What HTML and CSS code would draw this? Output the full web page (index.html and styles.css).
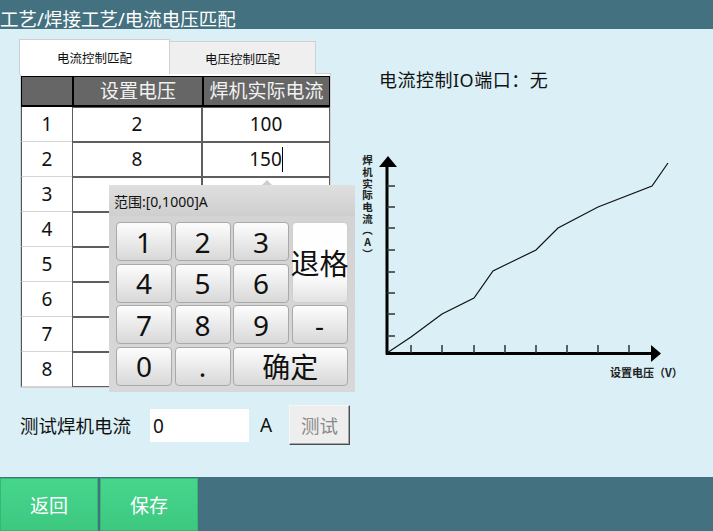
FILE: index.html
```html
<!DOCTYPE html>
<html lang="zh-CN">
<head>
<meta charset="utf-8">
<title>电流电压匹配</title>
<link rel="stylesheet" href="styles.css">
</head>
<body>
<div class="screen">
  <header class="topbar">工艺/焊接工艺/电流电压匹配</header>
  <main class="content">
    <section class="left">
      <div class="tabs">
        <div class="tab active">电流控制匹配</div>
        <div class="tab inactive">电压控制匹配</div>
      </div>
      <div class="panel">
        <div class="thead">
          <div class="th"></div>
          <div class="th">设置电压</div>
          <div class="th">焊机实际电流</div>
        </div>
        <div class="tr"><div class="num">1</div><div class="cell">2</div><div class="cell">100</div></div>
        <div class="tr"><div class="num">2</div><div class="cell">8</div><div class="cell">150<span class="caret"></span></div></div>
        <div class="tr"><div class="num">3</div><div class="cell"></div><div class="cell"></div></div>
        <div class="tr"><div class="num">4</div><div class="cell"></div><div class="cell"></div></div>
        <div class="tr"><div class="num">5</div><div class="cell"></div><div class="cell"></div></div>
        <div class="tr"><div class="num">6</div><div class="cell"></div><div class="cell"></div></div>
        <div class="tr"><div class="num">7</div><div class="cell"></div><div class="cell"></div></div>
        <div class="tr"><div class="num">8</div><div class="cell"></div><div class="cell"></div></div>
      </div>
      <div class="test-row">
        <span class="test-label">测试焊机电流</span>
        <div class="test-input">0</div>
        <span class="unit">A</span>
        <button class="test-btn">测试</button>
      </div>

      <div class="pop-arrow"></div>
      <div class="keypad">
        <div class="kp-head">范围:[0,1000]A</div>
        <div class="kp-grid">
          <button class="key">1</button>
          <button class="key">2</button>
          <button class="key">3</button>
          <button class="key back">退格</button>
          <button class="key">4</button>
          <button class="key">5</button>
          <button class="key">6</button>
          <button class="key">7</button>
          <button class="key">8</button>
          <button class="key">9</button>
          <button class="key">-</button>
          <button class="key">0</button>
          <button class="key">.</button>
          <button class="key ok">确定</button>
        </div>
      </div>
    </section>
    <section class="right">
      <div class="io">电流控制IO端口：无</div>
      <svg class="chart" viewBox="355 150 335 240" width="335" height="240" xmlns="http://www.w3.org/2000/svg">
        <text class="ylabel" x="367.5" y="155">焊机实际电流（A）</text>
        <path d="M387 354.5 V165" stroke="#000" stroke-width="3" fill="none"/>
        <polygon points="388,156 379,167 397,167" fill="#000"/>
        <path d="M386 353.5 H652" stroke="#000" stroke-width="3" fill="none"/>
        <polygon points="661,353.5 651,345 651,362" fill="#000"/>
        <path d="M387 186h8M387 207h8M387 228h8M387 250h8M387 272h8M387 293h8M387 314h8M387 336h8" stroke="#333" stroke-width="1.5" fill="none"/>
        <path d="M411 345v8M442 345v8M474 345v8M505 345v8M536 345v8M567 345v8M598 345v8M629 345v8" stroke="#333" stroke-width="1.5" fill="none"/>
        <polyline points="387,353 411,337 442,314 474,298 493,271 536,250 558,228 598,207 652,186 668,163" fill="none" stroke="#111" stroke-width="1.2"/>
        <text class="xlabel" x="610" y="377">设置电压（V）</text>
      </svg>
    </section>
  </main>
  <footer class="bottombar">
    <button class="nav-btn">返回</button>
    <button class="nav-btn">保存</button>
  </footer>
</div>
</body>
</html>
```
FILE: styles.css
```css
* { box-sizing: border-box; }
html, body { margin: 0; padding: 0; }
body {
  width: 713px;
  height: 531px;
  overflow: hidden;
  background: #daf0f6;
  font-family: "Noto Sans", "Noto Sans CJK SC", sans-serif;
  color: #111;
}
.screen { display: flex; flex-direction: column; height: 531px; }

.topbar {
  flex: none;
  height: 29px;
  background: #44717f;
  color: #fff;
  font-size: 18.5px;
  line-height: 21px;
  padding-top: 8px;
  white-space: nowrap;
}

.content { flex: none; height: 448px; display: flex; }

.left {
  flex: none;
  width: 332px;
  position: relative;
  padding: 10px 0 0 20px;
}

.tabs {
  display: flex;
  align-items: flex-end;
  margin-left: -1px;
  margin-bottom: -1px;
  position: relative;
  z-index: 1;
}
.tab {
  font-size: 12.5px;
  text-align: center;
  border: 1px solid #d0d0d0;
  border-bottom: none;
  padding-top: 3px;
  white-space: nowrap;
}
.tab.active { width: 151px; height: 35px; line-height: 31px; background: #fff; }
.tab.inactive { width: 146px; height: 33px; line-height: 29px; background: #efefef; border-left: none; }

.panel {
  width: 311px;
  height: 315px;
  background: #fff;
  border: 1px solid #d0d0d0;
  padding-top: 2px;
}
.thead {
  display: grid;
  grid-template-columns: 51px 130px 128px;
  height: 31px;
  background: #666;
  border-top: 1px solid #000;
  border-bottom: 2px solid #000;
}
.th {
  color: #f2f2f2;
  font-size: 19px;
  line-height: 28px;
  text-align: center;
  white-space: nowrap;
}
.th:first-child { border-left: 1px solid #000; }
.th + .th { border-left: 2px solid #000; }
.th:last-child { border-right: 1px solid #000; }

.tr { display: grid; grid-template-columns: 51px 130px 128px; height: 35px; }
.num {
  border-left: 1px solid #555;
  border-bottom: 1px solid #d4d4d4;
  text-align: center;
  font-size: 19px;
  line-height: 34px;
}
.cell {
  border: 1px solid #5e5e5e;
  text-align: center;
  font-size: 19px;
  line-height: 33px;
  white-space: nowrap;
}
.caret {
  display: inline-block;
  width: 1px;
  height: 25px;
  background: #000;
  vertical-align: middle;
  margin-top: -3px;
}

.test-row { display: flex; align-items: center; margin-top: 17px; height: 40px; }
.test-row > * { flex: none; }
.test-label { width: 130px; font-size: 18.5px; white-space: nowrap; }
.test-input {
  width: 99px;
  height: 33px;
  background: #fff;
  font-size: 19px;
  line-height: 35px;
  padding-left: 3px;
}
.unit { margin-left: 11px; width: 12px; font-size: 19px; }
.test-btn {
  margin-left: 17px;
  width: 61px;
  height: 40px;
  padding: 0;
  background: #eeeeee;
  border: 1px solid;
  border-color: #f7f7f7 #4d4d4d #4d4d4d #f7f7f7;
  box-shadow: inset -1px -1px 0 #a5a5a5;
  color: #8a8a8a;
  font-family: inherit;
  font-size: 18.5px;
}

.pop-arrow {
  position: absolute;
  left: 262px;
  top: 151px;
  width: 0;
  height: 0;
  border-left: 5px solid transparent;
  border-right: 5px solid transparent;
  border-bottom: 5px solid #cdcdcd;
}
.keypad {
  position: absolute;
  left: 109px;
  top: 156px;
  width: 246px;
  height: 207px;
  background: linear-gradient(#d2d2d2, #d8d8d8);
}
.kp-head {
  height: 31px;
  background: linear-gradient(#dfdfdf, #cfcfcf);
  font-size: 14px;
  line-height: 31px;
  padding: 1px 0 0 5px;
  white-space: nowrap;
}
.kp-grid {
  display: grid;
  grid-template-columns: repeat(4, 56px);
  grid-template-rows: repeat(4, 39px);
  gap: 2.5px;
  padding: 6px 7px;
}
.key {
  display: flex;
  align-items: center;
  justify-content: center;
  padding: 0;
  border: 1px solid #a9a9a9;
  border-radius: 4px;
  background: linear-gradient(#fdfdfd, #d8d8d8);
  color: #111;
  font-family: inherit;
  font-size: 28px;
  white-space: nowrap;
  overflow: visible;
}
.key.back {
  grid-column: 4;
  grid-row: 1 / span 2;
  background: linear-gradient(#fefefe 65%, #e2e2e2);
  border-color: #cfcfcf;
  font-size: 29px;
}
.key.ok { grid-column: 3 / span 2; }

.right {
  flex: 1;
  display: flex;
  flex-direction: column;
  align-items: flex-start;
  padding: 41px 0 0 23px;
}
.io {
  margin-left: 24px;
  font-size: 18px;
  line-height: 20px;
  letter-spacing: 0.5px;
  white-space: nowrap;
}
.chart { display: block; margin-top: 60px; }
.chart text {
  font-family: "Noto Sans CJK SC", "Noto Sans", sans-serif;
  font-weight: 700;
  font-size: 11px;
  fill: #222;
}
.chart text.ylabel {
  font-size: 10.5px;
  letter-spacing: 1.2px;
  writing-mode: vertical-rl;
  text-orientation: upright;
}

.bottombar {
  flex: none;
  height: 54px;
  background: #44717f;
  display: flex;
  gap: 2px;
  padding-top: 1px;
}
.nav-btn {
  width: 98px;
  height: 53px;
  padding: 0;
  border: 1px solid #36b874;
  background: linear-gradient(#47d58c, #3dc880);
  color: #fff;
  font-family: inherit;
  font-size: 19px;
}
```
